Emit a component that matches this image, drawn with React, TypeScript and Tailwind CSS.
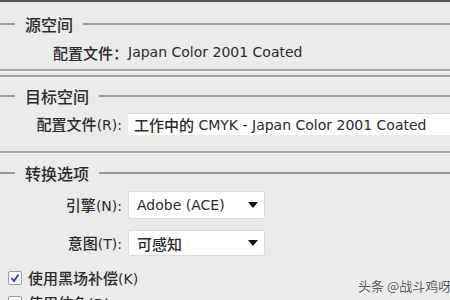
import React from "react";

const FONT = { fontFamily: '"DejaVu Sans", "Noto Sans CJK SC", sans-serif' };

function C({ children }: { children: React.ReactNode }) {
  return (
    <span className="text-[15px] font-medium" style={{ fontFamily: '"Noto Sans CJK SC", sans-serif' }}>
      {children}
    </span>
  );
}

function Line() {
  return (
    <div className="flex flex-col w-full">
      <div className="h-[2px] w-full bg-[#a4a4a4]" />
      <div className="h-px w-full bg-[#f8f8f8]" />
    </div>
  );
}

function Title({ text, cls }: { text: string; cls: string }) {
  return (
    <div className={`flex flex-col ${cls}`}>
      <div className="flex-1 flex items-center">
        <div className="w-[15px] h-[2px] bg-[#999999] shrink-0" />
        <div
          className="px-[10px] text-[16px] text-[#2e2e2e] leading-none font-medium shrink-0"
          style={{ fontFamily: '"Noto Sans CJK SC", sans-serif' }}
        >
          {text}
        </div>
        <div className="grow h-[2px] bg-[#999999]" />
      </div>
    </div>
  );
}

function Arrow() {
  return (
    <svg width="10" height="6" viewBox="0 0 10 6" className="ml-auto mr-[6px]">
      <path d="M0 0 H10 L5 6 Z" fill="#111" />
    </svg>
  );
}

export default function App() {
  return (
    <div
      className="relative w-[450px] h-[300px] overflow-hidden bg-[#ebebeb] text-[14px] text-[#2a2a2a] flex flex-col"
      style={FONT}
    >
      <div className="h-[2px] bg-[#555] shrink-0" />
      {/* Group 1 */}
      <div className="h-[67px] shrink-0 flex flex-col">
        <Title text="源空间" cls="h-[40px] mt-[2px]" />
        <div className="h-[16px] pl-[53px] flex items-center whitespace-nowrap leading-none">
          <C>配置文件：</C>
          <span>Japan Color 2001 Coated</span>
        </div>
      </div>
      <div className="shrink-0">
        <Line />
      </div>
      <div className="h-[3px] shrink-0" />
      <div className="shrink-0">
        <Line />
      </div>
      {/* Group 2 */}
      <div className="h-[73px] shrink-0 flex flex-col">
        <Title text="目标空间" cls="h-[28px] mt-[4px]" />
        <div className="mt-[3px] h-[22px] flex items-center">
          <div className="w-[124px] text-right pr-[2px] whitespace-nowrap leading-none">
            <C>配置文件</C>(R):
          </div>
          <div className="ml-[4px] flex-1 h-full bg-white border-t border-[#d6d6d6] flex items-center pl-[6px] whitespace-nowrap leading-none">
            <C>工作中的</C>
            <span>&nbsp;CMYK - Japan Color 2001 Coated</span>
          </div>
        </div>
      </div>
      <div className="shrink-0">
        <Line />
      </div>
      {/* Group 3 */}
      <div className="flex flex-col shrink-0">
        <Title text="转换选项" cls="h-[28px] mt-[5px]" />
        <div className="mt-[4px] h-[28px] flex items-center">
          <div className="w-[124px] text-right pr-[2px] whitespace-nowrap leading-none">
            <C>引擎</C>(N):
          </div>
          <div className="ml-[4px] w-[137px] h-full bg-white border border-[#dcdcdc] rounded-[2px] flex items-center pl-[8px] whitespace-nowrap leading-none">
            <span>Adobe (ACE)</span>
            <Arrow />
          </div>
        </div>
        <div className="mt-[11px] h-[26px] flex items-center">
          <div className="w-[124px] text-right pr-[2px] whitespace-nowrap leading-none">
            <C>意图</C>(T):
          </div>
          <div className="ml-[4px] w-[137px] h-full bg-white border border-[#dcdcdc] rounded-[2px] flex items-center pl-[8px] whitespace-nowrap leading-none">
            <C>可感知</C>
            <Arrow />
          </div>
        </div>
        <div className="mt-[14px] h-[16px] flex items-center pl-[8px]">
          <div className="w-[14px] h-[14px] bg-white border border-[#9a9a9a] rounded-[2px] flex items-center justify-center">
            <svg width="10" height="10" viewBox="0 0 10 10">
              <path d="M1.5 5.2 L4 8 L8.5 1.5" stroke="#2f3f8f" strokeWidth="1.8" fill="none" />
            </svg>
          </div>
          <div className="ml-[6px] whitespace-nowrap leading-none">
            <C>使用黑场补偿</C>(K)
          </div>
        </div>
        <div className="mt-[9px] h-[16px] flex items-center pl-[8px]">
          <div className="w-[14px] h-[14px] bg-white border border-[#9a9a9a] rounded-[2px]" />
          <div className="ml-[6px] whitespace-nowrap leading-none">
            <C>使用仿色</C>(D)
          </div>
        </div>
      </div>
      <div
        className="absolute left-[358px] top-[279px] text-[13px] text-[#555] whitespace-nowrap leading-none"
        style={{ fontFamily: '"Noto Sans CJK SC", sans-serif', textShadow: "0 0 2px #fff, 0 0 1px #fff" }}
      >
        头条 @战斗鸡呀
      </div>
    </div>
  );
}
